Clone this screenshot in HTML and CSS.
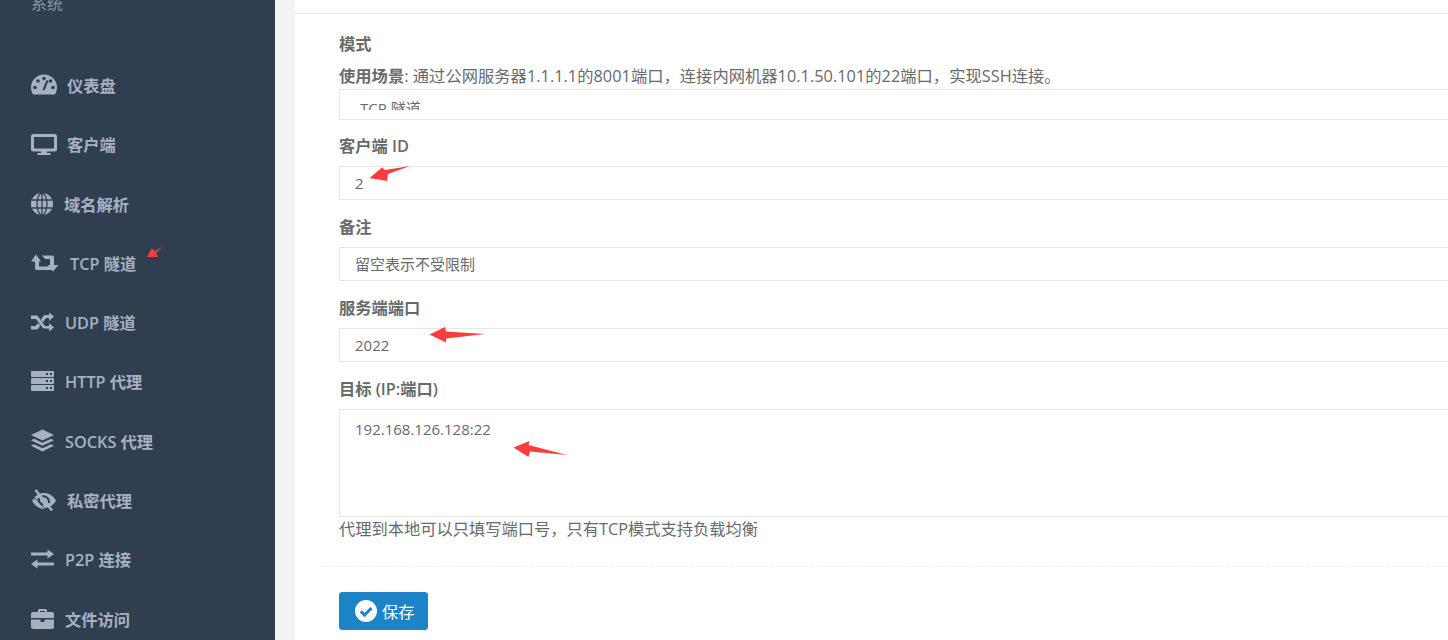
FILE: index.html
```html
<!DOCTYPE html>
<html lang="zh-CN">
<head>
<meta charset="utf-8">
<title>TCP 隧道</title>
<link rel="stylesheet" href="styles.css">
</head>
<body>
<div class="page">
  <nav class="sidebar">
    <div class="nav-head">系统</div>
    <a class="nav-item"><svg class="ico w26" viewBox="0 0 26 20"><path class="fg" d="M13 0A13 13 0 0 1 26 13c0 2.500-.7 4.700-1.900 6.400-.2.400-.6.600-1 .6H2.900c-.4 0-.8-.2-1-.6C.7 17.700 0 15.500 0 13A13 13 0 0 1 13 0z"/><circle class="bg" cx="4" cy="13" r="1.800"/><circle class="bg" cx="7" cy="6.500" r="1.800"/><circle class="bg" cx="13" cy="4" r="1.800"/><circle class="bg" cx="22" cy="13" r="1.800"/><circle class="bg" cx="19.500" cy="6.500" r="1.800"/><path class="bgs" d="M12.500 15.500 16.500 6"/></svg><span>仪表盘</span></a>
    <a class="nav-item"><svg class="ico w26" viewBox="0 0 26 21"><rect class="ol" x="1.500" y="1.500" width="23" height="14.500" rx="1"/><path class="fg" d="M10 17h6v2h3.500v2H6.500v-2H10z"/></svg><span>客户端</span></a>
    <a class="nav-item"><svg class="ico w22" viewBox="0 0 22 22"><circle class="fg" cx="11" cy="11" r="11"/><ellipse class="bgl" cx="11" cy="11" rx="5" ry="11"/><path class="bgl" d="M11 0v22M1 7h20M1 15h20"/></svg><span>域名解析</span></a>
    <a class="nav-item wide"><svg class="ico w28" viewBox="0 0 28 18"><path class="fg" d="M5 .5 10 7.500H8V12.500H19l3 3.500H6c-1.300 0-2-.7-2-2V7.500H0zM11 1.500H21c1.300 0 2 .7 2 2V11h4.500L22 17.500 16.500 11H19V5H14z"/></svg><span>TCP 隧道</span></a>
    <a class="nav-item"><svg class="ico w23" viewBox="0 0 23 19"><path class="fg" d="M18 0l5 4-5 4.500V5.500h-3l-3 4.500-2-3 2.200-3.300c.8-1 1.500-1.200 2.800-1.200h3zM0 3h4.500c1.500 0 2.300.4 3 1.500L14 13.500h4v-3l5 4.500-5 4v-3h-4c-1.500 0-2.200-.4-3-1.500L5 6.500H0zM7.200 10.500l2 3-1.700 2.200c-.8 1-1.500 1.300-3 1.300H0v-3.500h4.500z"/></svg><span>UDP 隧道</span></a>
    <a class="nav-item"><svg class="ico w23" viewBox="0 0 23 20"><rect class="fg" width="23" height="6" rx="1"/><rect class="fg" y="7" width="23" height="6" rx="1"/><rect class="fg" y="14" width="23" height="6" rx="1"/><path class="bgd" d="M15 2h2v2h-2zM19 2h2v2h-2zM15 9h2v2h-2zM19 9h2v2h-2zM15 16h2v2h-2zM19 16h2v2h-2z"/></svg><span>HTTP 代理</span></a>
    <a class="nav-item"><svg class="ico w23 tall" viewBox="0 0 23 22"><path class="fg" d="M11.500 0 23 5.500 11.500 11 0 5.500z"/><path class="fg" d="M3 9.300l8.500 4 8.500-4 3 1.400-11.500 5.500L0 10.700z"/><path class="fg" d="M3 14.800l8.500 4 8.500-4 3 1.400L11.500 22 0 16.200z"/></svg><span>SOCKS 代理</span></a>
    <a class="nav-item"><svg class="ico w26 tall" viewBox="0 0 26 23"><path class="fg" d="M1 11.500C4 6.500 8 4 13 4s9 2.500 12 7.500c-2 4-6 7-11 7.500L4 8.500z"/><path class="fg" d="M1 12c1.500-1.500 2.500-2.500 3-2.500L14 20c-5.500 0-10-3-13-8z"/><path class="bgs" d="M8 9c-1 2.500 1 6 4 7M11 7.500c4-1 7.500 2 7 6.500"/><path class="cut" d="M4.500 1 21 21.500"/></svg><span>私密代理</span></a>
    <a class="nav-item"><svg class="ico w23" viewBox="0 0 23 19"><path class="fg" d="M16.500 0 23 4.500 16.500 9V6H0V3h16.500zM6.500 10v3H23v3H6.500v3L0 14.500z"/></svg><span>P2P 连接</span></a>
    <a class="nav-item"><svg class="ico w23" viewBox="0 0 23 20"><path class="fg" d="M7 3V1.500C7 .6 7.600 0 8.500 0h6c.9 0 1.500.6 1.500 1.500V3h5c1.100 0 2 .9 2 2v4H0V5c0-1.100.9-2 2-2zm2 0h5V2H9zM0 10.500h9.500V13h4v-2.500H23V18c0 1.100-.9 2-2 2H2c-1.100 0-2-.9-2-2z"/></svg><span>文件访问</span></a>
  </nav>

  <main class="content">
    <div class="topline"></div>
    <form class="form">
      <div class="section">
        <div class="field-mode">
          <label class="label label-mode">模式</label>
          <p class="usage"><b>使用场景</b>: 通过公网服务器1.1.1.1的8001端口，连接内网机器10.1.50.101的22端口，实现SSH连接。</p>
          <div class="select"><span>TCP 隧道</span></div>
        </div>
        <div class="field">
          <label class="label">客户端 ID</label>
          <div class="control">2</div>
        </div>
        <div class="field">
          <label class="label">备注</label>
          <div class="control">留空表示不受限制</div>
        </div>
        <div class="field">
          <label class="label">服务端端口</label>
          <div class="control">2022</div>
        </div>
        <div class="field">
          <label class="label">目标 (IP:端口)</label>
          <div class="control area">192.168.126.128:22</div>
          <p class="help">代理到本地可以只填写端口号，只有TCP模式支持负载均衡</p>
        </div>
      </div>
      <div class="divider"></div>
      <button class="btn" type="button"><svg class="btn-ico" viewBox="0 0 22 22"><circle cx="11" cy="11" r="11" fill="#fff"/><path d="M5.800 11.200 9.500 15l7-7" fill="none" stroke="#1c84c6" stroke-width="3"/></svg>保存</button>
    </form>
  </main>

  <svg class="marks" viewBox="0 0 1448 640">
    <polygon points="147,257 151.500,248.500 155,251 162,247 156,253 158,257"/>
    <polygon points="369.500,178 382,167.500 385,170 410,166 388,174 387,181"/>
    <polygon points="429.500,334.500 445,327 446,331.500 485,334 446,338.500 446,342.500"/>
    <polygon points="513.500,447.500 529.500,441 528.500,445 567,455 530,451.500 528.500,457"/>
  </svg>
</div>
</body>
</html>
```

FILE: styles.css
```css
* { box-sizing: border-box; }
html, body { margin: 0; height: 100%; overflow: hidden; }
body {
  font-family: "Open Sans", "Noto Sans CJK SC", sans-serif;
  font-size: 16.250px;
  color: #676a6c;
  background: #f3f3f4;
}
.page { position: relative; display: flex; width: 1448px; height: 640px; overflow: hidden; }

.sidebar { flex: 0 0 275px; height: 640px; background: #303f50; color: #a7b1c2; padding-left: 31px; overflow: hidden; }
.nav-head { height: 24px; margin-top: -8px; margin-bottom: 39.300px; line-height: 24px; color: #8795a8; font-size: 16px; }
.nav-item { display: flex; align-items: center; gap: 10px; height: 59.300px; font-weight: 600; white-space: nowrap; }
.nav-item.wide { gap: 11px; }
.ico { flex: none; display: block; }
.w22 { width: 22px; height: 22px; margin-right: 1px; }
.w23 { width: 23px; height: 20px; margin-right: 1px; }
.w26 { width: 26px; height: 21px; }
.w28 { width: 28px; height: 18px; }
.tall { height: 23px; }
.fg { fill: #a7b1c2; }
.bg { fill: #303f50; }
.bgd { fill: #303f50; }
.bgs { fill: none; stroke: #303f50; stroke-width: 2; }
.bgl { fill: none; stroke: #303f50; stroke-width: 1.300; }
.ol { fill: none; stroke: #a7b1c2; stroke-width: 3; }
.cut { fill: none; stroke: #a7b1c2; stroke-width: 2.500; }

.content { flex: 0 0 auto; width: 1400px; margin-left: 20px; background: #fff; }
.topline { height: 14px; border-bottom: 1px solid #e7eaec; }
.form { padding: 0 0 0 25px; }
.section { padding-left: 19px; }
.label { display: block; font-weight: 600; line-height: 21px; }
.label-mode { padding-top: 20px; height: 42px; }
.usage { margin: 9px 0 0; line-height: 22px; height: 27px; letter-spacing: .05px; white-space: nowrap; }
.usage b { font-weight: 700; }
.select { height: 31px; width: 1300px; margin: -3px 0 -1px; border: 1px solid #e5e6e7; padding: 0 0 0 20px; overflow: hidden; font-size: 15px; }
.select span { display: block; height: 20px; overflow: hidden; line-height: 36px; }
.field { margin-top: 17px; }
.field .label { height: 24px; margin-bottom: 6px; }
.control { width: 1300px; height: 34px; border: 1px solid #e5e6e7; padding: 6px 15px; font-size: 15px; line-height: 21px; }
.area { height: 108px; padding-top: 9px; }
.help { margin: 1px 0 0; line-height: 22px; }
.divider { height: 1px; margin: 26px 0 25px; border-top: 1px dashed #eceef0; }
.btn { display: flex; align-items: center; gap: 5px; margin-left: 19px; width: 89px; height: 38px; padding: 0 0 0 15px; background: #1c84c6; border: 1px solid #1c84c6; border-radius: 3px; color: #fff; font: inherit; }
.btn-ico { width: 22px; height: 22px; flex: none; }

.marks { position: absolute; left: 0; top: 0; width: 1448px; height: 640px; pointer-events: none; }
.marks polygon { fill: #ff3b3b; }
```
